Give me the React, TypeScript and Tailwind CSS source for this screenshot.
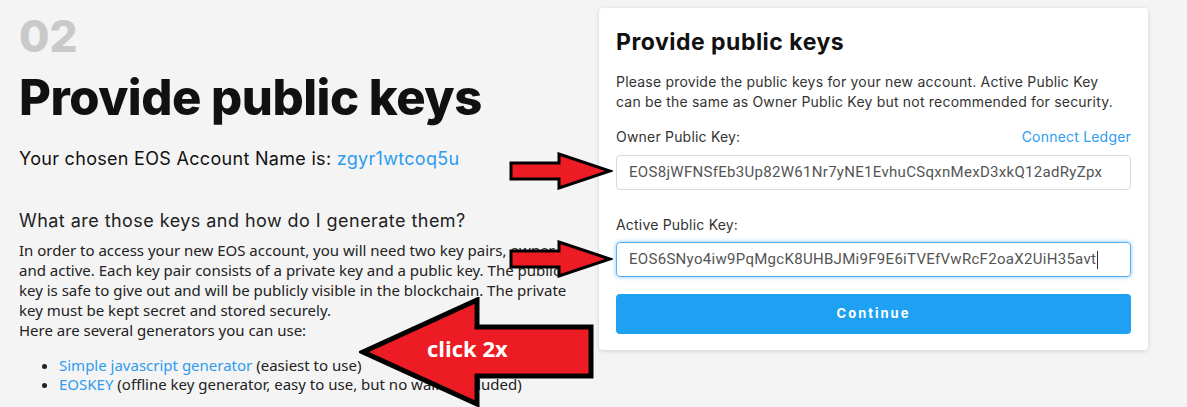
const sans = "font-['Inter','Open_Sans',sans-serif]";

function Arrow({ className }: { className: string }) {
  return (
    <svg className={className} viewBox="0 0 104 38" fill="none">
      <path d="M2 11 H50 V2 L101 19 L50 36 V27 H2 Z" fill="#ed1c24" stroke="#000" strokeWidth="3" strokeLinejoin="miter" />
    </svg>
  );
}

function BigArrow() {
  return (
    <div className="absolute left-[359px] top-[297px] h-[110px] w-[236px]">
      <svg className="absolute inset-0 h-full w-full" viewBox="0 0 236 110" fill="none">
        <path d="M4 55 L118 3 V30 H232 V79 H118 V107 Z" fill="#ed1c24" stroke="#000" strokeWidth="5" strokeLinejoin="miter" />
      </svg>
      <span className="absolute left-[68px] top-[40px] font-['Open_Sans',sans-serif] text-[22px] font-bold leading-none text-white">
        click 2x
      </span>
    </div>
  );
}

export default function App() {
  return (
    <div className="relative h-[407px] w-[1187px] overflow-hidden bg-[#f4f4f4]">
      <div className="flex items-start">
        <div className={`w-[599px] shrink-0 pl-[19px] pt-[12px] ${sans}`}>
          <div className="text-[44px] font-extrabold leading-[48px] text-[#c9c9c9]">02</div>
          <h1 className="mt-[8px] text-[49px] font-extrabold leading-[60px] tracking-[-0.5px] text-[#111]">Provide public keys</h1>
          <p className="mt-[19px] text-[18px] leading-[24px] tracking-[0.3px] text-[#111]">
            Your chosen EOS Account Name is: <span className="text-[#2d9cf0]">zgyr1wtcoq5u</span>
          </p>
          <h2 className="mt-[38px] text-[18px] leading-[24px] tracking-[0.45px] text-[#222]">What are those keys and how do I generate them?</h2>
          <div className="font-['Noto_Sans',sans-serif] text-[15px] text-[#222]">
            <p className="mt-[7px] leading-[20px]">
              In order to access your new EOS account, you will need two key pairs, owner
              <br />
              and active. Each key pair consists of a private key and a public key. The public
              <br />
              key is safe to give out and will be publicly visible in the blockchain. The private
              <br />
              key must be kept secret and stored securely.
              <br />
              Here are several generators you can use:
            </p>
            <ul className="mt-[16px] list-disc pl-[40px] leading-[19px]">
              <li>
                <span className="text-[#2d9cf0]">Simple javascript generator</span> (easiest to use)
              </li>
              <li>
                <span className="text-[#2d9cf0]">EOSKEY</span> (offline key generator, easy to use, but no wallet included)
              </li>
            </ul>
          </div>
        </div>

        <div className={`mt-[8px] w-[549px] shrink-0 rounded-[4px] bg-white px-[17px] pb-[16px] pt-[19px] shadow-[0_1px_4px_rgba(0,0,0,0.15)] ${sans}`}>
          <h3 className="text-[23px] font-bold leading-[30px] tracking-[0.5px] text-[#111]">Provide public keys</h3>
          <p className="mt-[15px] text-[14px] leading-[20px] tracking-[0.2px] text-[#333]">
            Please provide the public keys for your new account. Active Public Key
            <br />
            can be the same as Owner Public Key but not recommended for security.
          </p>
          <div className="mt-[15px] flex items-center justify-between text-[14px] leading-[20px] tracking-[0.2px]">
            <span className="text-[#333]">Owner Public Key:</span>
            <span className="text-[#2d9cf0]">Connect Ledger</span>
          </div>
          <div className="mt-[8px] flex h-[35px] items-center rounded-[4px] border border-[#d9d9d9] px-[12px] font-['Roboto',sans-serif] text-[15px] tracking-[0.3px] text-[#555]">
            EOS8jWFNSfEb3Up82W61Nr7yNE1EvhuCSqxnMexD3xkQ12adRyZpx
          </div>
          <div className="mt-[25px] text-[14px] leading-[20px] tracking-[0.2px] text-[#333]">Active Public Key:</div>
          <div className="mt-[7px] flex h-[35px] items-center rounded-[4px] border border-[#5aaef0] px-[12px] font-['Roboto',sans-serif] text-[15px] tracking-[0.3px] text-[#555] shadow-[0_0_4px_rgba(45,156,240,0.6)]">
            EOS6SNyo4iw9PqMgcK8UHBJMi9F9E6iTVEfVwRcF2oaX2UiH35avt
            <span className="ml-px inline-block h-[18px] w-px bg-[#333]" />
          </div>
          <button className="mt-[17px] flex h-[40px] w-full items-center justify-center rounded-[4px] bg-[#1ea1f2] text-[13px] font-bold tracking-[2px] text-white">
            Continue
          </button>
        </div>
      </div>

      <Arrow className="absolute left-[509px] top-[152px] h-[38px] w-[104px]" />
      <Arrow className="absolute left-[509px] top-[240px] h-[38px] w-[104px]" />
      <BigArrow />
    </div>
  );
}
